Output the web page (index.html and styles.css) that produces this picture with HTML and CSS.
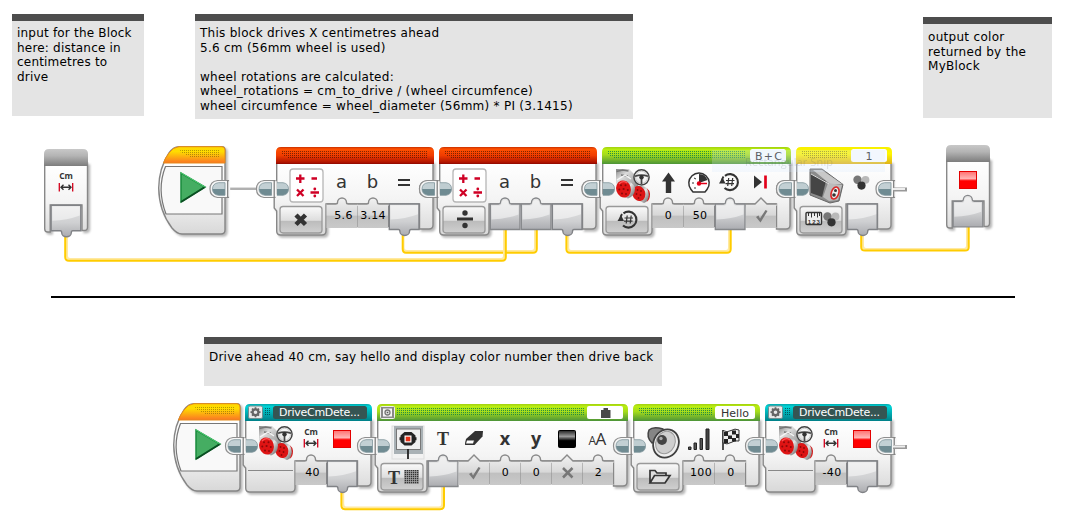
FILE: index.html
```html
<!DOCTYPE html>
<html lang="en">
<head>
<meta charset="utf-8">
<title>Drive centimetres program</title>
<link rel="stylesheet" href="styles.css">
</head>
<body>
<main class="canvas">
<section class="note note-input">input for the Block<br>here: distance in<br>centimetres to<br>drive</section>
<section class="note note-about">This block drives X centimetres ahead<br>5.6 cm (56mm wheel is used)<br><br>wheel rotations are calculated:<br>wheel_rotations = cm_to_drive / (wheel circumfence)<br>wheel circumfence = wheel_diameter (56mm) * PI (3.1415)</section>
<section class="note note-output">output color<br>returned by the<br>MyBlock</section>
<section class="note note-usage">Drive ahead 40 cm, say hello and display color number then drive back</section>
<svg class="diagram" width="1069" height="520" viewBox="0 0 1069 520">
<defs>
<linearGradient id="red" x2="0" y2="1"><stop offset="0" stop-color="#c83000"/><stop offset=".12" stop-color="#ff5000"/><stop offset=".5" stop-color="#f03c00"/><stop offset=".9" stop-color="#b01400"/><stop offset="1" stop-color="#8c0800"/></linearGradient>
<linearGradient id="green" x2="0" y2="1"><stop offset="0" stop-color="#a2d010"/><stop offset=".15" stop-color="#b9ee10"/><stop offset=".45" stop-color="#a5dc1c"/><stop offset="1" stop-color="#4c9438"/></linearGradient>
<linearGradient id="yellow" x2="0" y2="1"><stop offset="0" stop-color="#f8f000"/><stop offset=".4" stop-color="#fff600"/><stop offset="1" stop-color="#dfb21c"/></linearGradient>
<linearGradient id="teal" x2="0" y2="1"><stop offset="0" stop-color="#00a8ac"/><stop offset=".15" stop-color="#00d2d6"/><stop offset="1" stop-color="#008088"/></linearGradient>
<linearGradient id="orange" x2="0" y2="1"><stop offset="0" stop-color="#ffd800"/><stop offset=".3" stop-color="#ffdc00"/><stop offset="1" stop-color="#fb7524"/></linearGradient>
<linearGradient id="gray" x2="0" y2="1"><stop offset="0" stop-color="#c8c8c8"/><stop offset=".4" stop-color="#b4b4b4"/><stop offset="1" stop-color="#7c7c7c"/></linearGradient>
<linearGradient id="body" gradientUnits="userSpaceOnUse" x1="0" y1="16" x2="0" y2="88"><stop offset="0" stop-color="#fff"/><stop offset=".5" stop-color="#f4f4f4"/><stop offset="1" stop-color="#d8d8d8"/></linearGradient>
<linearGradient id="cellfill" gradientUnits="userSpaceOnUse" x1="0" y1="52" x2="0" y2="81"><stop offset="0" stop-color="#f0f0f0"/><stop offset=".55" stop-color="#d8d8d8"/><stop offset=".6" stop-color="#c0c0c0"/><stop offset="1" stop-color="#c9c9c9"/></linearGradient>
<linearGradient id="btn" x2="0" y2="1"><stop offset="0" stop-color="#fafafa"/><stop offset=".52" stop-color="#dedede"/><stop offset=".56" stop-color="#bcbcbc"/><stop offset="1" stop-color="#d0d0d0"/></linearGradient>
<linearGradient id="plugfill" x2="0" y2="1"><stop offset="0" stop-color="#e4e4e4"/><stop offset=".55" stop-color="#cfd0d2"/><stop offset="1" stop-color="#abacb0"/></linearGradient>
<linearGradient id="swatch" x2="0" y2="1"><stop offset="0" stop-color="#ff7070"/><stop offset=".42" stop-color="#ffb4b4"/><stop offset=".55" stop-color="#f00"/><stop offset="1" stop-color="#f00"/></linearGradient>
<linearGradient id="ink" x2="0" y2="1"><stop offset="0" stop-color="#222"/><stop offset=".35" stop-color="#999"/><stop offset=".6" stop-color="#000"/></linearGradient>
<linearGradient id="metal" x2="1" y2="1"><stop offset="0" stop-color="#888"/><stop offset=".3" stop-color="#dcdcdc"/><stop offset="1" stop-color="#777"/></linearGradient>
<linearGradient id="barrel" x2="1" y2="1"><stop offset="0" stop-color="#666"/><stop offset=".45" stop-color="#e6e6e6"/><stop offset="1" stop-color="#555"/></linearGradient>
<pattern id="dots" width="2" height="2" patternUnits="userSpaceOnUse"><rect width="1" height="1" fill="#000" opacity=".48"/></pattern>
<pattern id="gdots" width="2" height="2" patternUnits="userSpaceOnUse"><rect width="1" height="1" fill="#007846" opacity=".75"/></pattern>
<pattern id="screen" width="2" height="2" patternUnits="userSpaceOnUse"><rect width="2" height="2" fill="#aaa"/><rect width="1.3" height="1.3" fill="#333"/></pattern>

<g id="conn-out"><path d="M3.500-8.500H-7.500Q-15-7.500-15 0T-7.500 8.500H3.500z" fill="#f6f6f6" stroke="#8f8f8f" stroke-width="1.200"/><path d="M0-6.300H-6.500Q-12.500-5.500-12.500 0H0z" fill="#c3d0d4"/><path d="M0 6.300H-6.500Q-12.500 5.500-12.500 0H0z" fill="#6f8b92"/><path d="M0-6.300H-6.500Q-12.500-5.500-12.500 0T-6.500 6.300H0z" fill="none" stroke="#7d949a" stroke-width=".8"/><path d="M1-7.800H5.200V7.800H1z" fill="#f8f8f8"/><path d="M2.700-8.500V8.500" stroke="#777" stroke-width="1.200"/></g>
<g id="conn-in"><path d="M.8-6.300H7Q12.500-5.500 12.500 0H.8z" fill="#bfcdd1"/><path d="M.8 6.300H7Q12.500 5.500 12.500 0H.8z" fill="#6f8b92"/><path d="M.8-6.300H7Q12.500-5.500 12.500 0T7 6.300H.8" fill="none" stroke="#82979d" stroke-width=".8"/></g>
<g id="tail"><path d="M1 0H15" stroke="#999" stroke-width="4"/><path d="M1-.5H13" stroke="#eee" stroke-width="2"/></g>
<g id="cell"><path d="M0 57H9q2 0 2-1.500a4.500 4.500 0 0 1 9 0q0 1.500 2 1.500h9v24H0z" fill="url(#cellfill)"/><path d="M0 57H9q2 0 2-1.500a4.500 4.500 0 0 1 9 0q0 1.500 2 1.500h9" fill="none" stroke="#8a8a8a" stroke-width="1.400"/><path d="M31 59V80" stroke="#888"/></g>
<g id="cell-bool"><path d="M0 57H9l6.500-6 6.500 6h9v24H0z" fill="url(#cellfill)"/><path d="M0 57H9.500l6-6 6 6H31" fill="none" stroke="#8a8a8a" stroke-width="1.400"/><path d="M31 59V80" stroke="#888"/></g>
<g id="plug-in"><path d="M.8 57H9q2 0 2-1.500a4.500 4.500 0 0 1 9 0q0 1.500 2 1.500h8.500V82.500H.8z" fill="url(#plugfill)" stroke="#85878a" stroke-width="1.300"/><path d="M2 58.500h8q2 0 2-2a3.500 3.500 0 0 1 7 0q0 2 2 2h8v9Q17 72 2 72.500z" fill="#fff" opacity=".5"/></g>
<g id="plug-out"><path d="M.8 57H30.500V82.500H22.500q-1.500 0-1.500 2a4.800 4 0 0 1-9.600 0q0-2-1.500-2H.8z" fill="url(#plugfill)" stroke="#808286" stroke-width="1.400"/><path d="M2 58.300H29.500v9Q17 72 2 72.500z" fill="#fff" opacity=".5"/></g>
<rect id="button" x="4" y="59.500" width="42" height="26.500" rx="3" fill="url(#btn)" stroke="#999" stroke-width="1.300"/>

<g id="start"><path d="M67 4Q67 .7 64 .7H21Q15 1 11 7Q1 22 .7 42Q1 65 14 82Q19 88 24 88H63Q67 88 67 84z" fill="url(#body)" stroke="#858585" stroke-width="1.400" class="lift"/><path d="M67 4Q67 .7 64 .7H21Q15 1 11 7Q7 12 5.500 17H67z" fill="url(#orange)" stroke="#e58b1a"/><path d="M22 4h40v7H31V9h-4V7h-4z" fill="url(#dots)" opacity=".6"/><path d="M7.500 20.500H64V68H8Q-1.500 43 7.500 20.500z" fill="#f9f9f9" stroke="#777" stroke-width="1.200"/><path d="M23 27V56L47 41z" fill="#45ad62" stroke="#188a3c" stroke-width="1.500"/><path d="M23 56 47 41" stroke="#0b4d22" stroke-width="1.700"/><path d="M22.500 26.500 47 41" stroke="#52ce75" stroke-width="1"/></g>

<g id="math"><rect x="14" y="22" width="33" height="33" rx="3" fill="#fff" stroke="#b6b6b6" stroke-width="1.300"/><g stroke="#cf0025" stroke-width="2.300"><path d="M20 31.500h8.500M24.300 27.500v8.500M35.500 31.500h5.500M21 42.500l6.500 6.500M27.500 42.500l-6.500 6.500M34.500 45.500h8.500"/></g><circle cx="38.800" cy="42" r="1.400" fill="#cf0025"/><circle cx="38.800" cy="49" r="1.400" fill="#cf0025"/><text class="sym" x="65.500" y="41" text-anchor="middle">a</text><text class="sym" x="96.500" y="41" text-anchor="middle">b</text><path d="M122 33H134M122 38H134" stroke="#333" stroke-width="1.800"/></g>

<g id="wheel"><circle r="7.600" fill="#f3f3f3" fill-opacity=".8" stroke="#444" stroke-width="1.500"/><circle r="6" fill="none" stroke="#bbb" stroke-width=".7"/><path d="M-6.500-1Q0-3.500 6.500-1M0 0V7" fill="none" stroke="#444" stroke-width="1.700"/><circle r="2.200" fill="#333"/></g>
<g id="motor"><path d="M14 22H27L39 34 34 42 20 44 14 36z" fill="url(#metal)"/><path d="M14.500 24.500l6-1.500 6 1M19 28l7 1" stroke="#777" fill="none" stroke-width="1.300"/><path d="M15 33l8-5 6 4" stroke="#f6f6f6" fill="none" stroke-width="1.300"/><path d="M38 39Q47 39 47.500 46.500Q47 54 42 56L36 53.500V40z" fill="url(#barrel)"/><path d="M44.500 41Q49 47 44.500 55Q48 53 48 47Q47.500 43 44.500 41z" fill="#d31b1b"/><ellipse cx="36.800" cy="46.500" rx="6.500" ry="7.700" fill="#dc1515" transform="rotate(-18 36.800 46.500)"/><path d="M22 34Q31 34 33 41Q33 49 26 51.500L20 49z" fill="url(#barrel)"/><ellipse cx="21.500" cy="42" rx="7.300" ry="8.600" fill="#de1414" transform="rotate(-18 21.500 42)"/><path d="M17 37q4-4 8-1" stroke="#f55" fill="none" stroke-width="1.200"/><g fill="#8b0909"><circle cx="19" cy="38.200" r="1"/><circle cx="23.500" cy="38.200" r="1"/><circle cx="17.300" cy="42.500" r="1"/><circle cx="21.600" cy="42" r="1.100"/><circle cx="25.800" cy="43" r="1"/><circle cx="20" cy="46.500" r="1"/><circle cx="24" cy="47" r=".9"/><circle cx="35.500" cy="43" r=".9"/><circle cx="39" cy="44" r=".9"/><circle cx="34.500" cy="47" r=".9"/><circle cx="38.500" cy="48" r=".9"/><circle cx="36.500" cy="51" r=".9"/></g><use href="#wheel" x="39.500" y="30.300"/></g>
<g id="cm"><text x="0" y="-3" class="cm" text-anchor="middle">Cm</text><path d="M-6.700 1v8.500M6.700 1v8.500" stroke="#d3001b" stroke-width="1.300"/><path d="M-5 5.200H5M-2.500 2.700-5 5.200-2.500 7.700M2.500 2.700 5 5.200 2.500 7.700" fill="none" stroke="#333" stroke-width="1.400"/></g>
<g id="colorbox"><rect x="-8.500" y="-8.500" width="17" height="17" fill="url(#swatch)" stroke="#e30000" stroke-width="1"/></g>
<g id="rot"><path d="M-5-6.200A8 8 0 1 1-5.500 6" fill="none" stroke="#333" stroke-width="2.100"/><path d="M-6.500-5.500A8 8 0 0 0-8 0" fill="none" stroke="#333" stroke-width="2"/><path d="M-11 1.500-7.500-4.500-4.500 1.500z" fill="#333"/><path d="M-1.300-4-2.300 4M2.700-4 1.700 4M-4-1.500H4.500M-4.500 1.700H4" stroke="#333" stroke-width="1.200"/></g>
<g id="rgb"><circle cx="-4" cy="-2.500" r="4.200" fill="#777"/><circle cx="4" cy="-2.500" r="3.900" fill="#b9b9b9"/><circle cx="0" cy="3.300" r="4.100" fill="#333"/></g>
<g id="myblock"><path d="M.7 15V46l-2.500 3v12l2.500 3v20q0 4 4 4H46q4 0 4-4V57h62.500v25H122q4 0 4-4V15z" class="shell"/><path d="M0 17V5Q0 0 5 0H122Q127 0 127 5V17z" fill="url(#teal)"/><rect x="3.500" y="2" width="14" height="12.500" rx="1.500" fill="#e9e9e9" stroke="#6f8f90"/><circle cx="10.500" cy="8.200" r="2.900" fill="none" stroke="#666" stroke-width="2.200"/><path d="M10.500 3.200v2M10.500 11.200v2M5.500 8.200h2M13.500 8.200h2M7 4.700l1.500 1.500M12.500 10.200l1.500 1.500M14 4.700l-1.500 1.500M8.500 10.200 7 11.700" stroke="#666" stroke-width="1.700"/><path d="M20 4h5v8h-5z" fill="url(#dots)"/><rect x="28" y="2" width="94" height="13" rx="2.500" fill="#355553"/><text class="title" x="34" y="12.300" textLength="81" fill="#fff">DriveCmDete...</text><path d="M3 66.500H48" stroke="#888" stroke-width="1.200"/><use href="#motor"/><use href="#cm" x="66" y="34"/><use href="#colorbox" x="97" y="35"/><use href="#cell" x="50.500"/><use href="#plug-out" x="81.500"/><use href="#conn-in" y="42"/></g>
<path id="check" d="M-5.500 1-3-.5-1.500 2.500 4-6 6-5-1 6.500z" fill="#777"/>
</defs>

<path d="M51 297H1015" stroke="#000" stroke-width="2"/>

<g class="wires">
<path class="wire-lite" d="M403.500 234V247.500Q403.500 251 407 251H532Q535 251 535 248V230"/>
<path class="wire" d="M402.700 234V249Q402.700 252.700 406 252.700H533Q536.800 252.700 536.800 249V230"/>
<path class="wire-lite" d="M67 236V256Q67 259 70 259H501Q504 259 504 256V230"/>
<path class="wire" d="M65.200 236V257Q65.200 260.800 69 260.800H502Q505.800 260.800 505.800 257V230"/>
<path class="wire-lite" d="M568.200 234V248Q568.200 251 571 251H726Q729 251 729 248V230"/>
<path class="wire" d="M566.400 234V249Q566.400 252.700 570 252.700H727Q730.700 252.700 730.700 249V230"/>
<path class="wire-lite" d="M863 234V246Q863 249 866 249H964Q967 249 967 246V227"/>
<path class="wire" d="M861.200 234V247Q861.200 250.600 865 250.600H965Q968.700 250.600 968.700 247V227"/>
<path class="wire-lite" d="M343.200 490V504Q343.200 507.500 346 507.500H439Q442.200 507.500 442.200 504V486"/>
<path class="wire" d="M341.400 490V505Q341.400 509.300 345 509.300H440Q444 509.300 444 505V486"/>
</g>

<!-- Input parameter terminal -->
<g transform="translate(44 149)"><path d="M.7 14V80q0 3 3 3h2.500V56H38v25.500h2q3.500 0 3.500-3V14z" class="shell"/><path d="M0 17V5Q0 0 5 0H39Q44 0 44 5V17z" fill="url(#gray)"/><use href="#cm" x="22" y="33"/><use href="#plug-out" x="6.300" y="-.7"/></g>

<!-- Top program row -->
<g transform="translate(158 146)"><use href="#start"/></g>
<path d="M227 188.500H263" stroke="#b0b0b0" stroke-width="3"/><path d="M227 187.500H263" stroke="#ddd"/>
<use href="#conn-out" x="225" y="189"/>

<g transform="translate(276 147)">
<path d="M.7 15V46l-2.500 3v12l2.500 3v20q0 4 4 4H46q4 0 4-4V57h93.500v25H153q4 0 4-4V15z" class="shell"/><path d="M0 17V5Q0 0 5 0H153Q158 0 158 5V17z" fill="url(#red)"/><path d="M5 4H152v7H11V9H8V7H5z" fill="url(#dots)"/>
<use href="#math"/><use href="#button"/><path d="M20 68 29.500 77.500M29.500 68 20 77.500" stroke="#333" stroke-width="4.500"/>
<use href="#cell" x="50.500"/><use href="#cell" x="81.500"/><text class="val" x="67.500" y="72">5.6</text><text class="val" x="97" y="72">3.14</text><use href="#plug-out" x="112.500"/><use href="#conn-in" y="42"/></g>
<use href="#conn-out" x="271.500" y="189"/>
<use href="#conn-out" x="434.500" y="189"/>

<g transform="translate(439 147)">
<path d="M.7 15V46l-2.500 3v12l2.500 3v20q0 4 4 4H46q4 0 4-4V57h93.500v25H153q4 0 4-4V15z" class="shell"/><path d="M0 17V5Q0 0 5 0H153Q158 0 158 5V17z" fill="url(#red)"/><path d="M5 4H152v7H11V9H8V7H5z" fill="url(#dots)"/>
<use href="#math"/><use href="#button"/><path d="M18 72H34" stroke="#333" stroke-width="3"/><circle cx="26" cy="66" r="2.700" fill="#333"/><circle cx="26" cy="78.500" r="2.700" fill="#333"/>
<use href="#plug-in" x="50.500"/><use href="#plug-in" x="81.500"/><use href="#plug-out" x="112.500"/><use href="#conn-in" y="42"/></g>
<use href="#conn-out" x="434.500" y="189"/>
<use href="#conn-out" x="597" y="189"/>

<g transform="translate(602 147)">
<path d="M.7 15V46l-2.500 3v12l2.500 3v20q0 4 4 4H46q4 0 4-4V57h124.500v25H184q4 0 4-4V15z" class="shell"/><path d="M0 17V5Q0 0 5 0H184Q189 0 189 5V17z" fill="url(#green)"/><path d="M5 4H144v7H11V9H8V7H5z" fill="url(#gdots)"/>
<rect x="148" y="2" width="36" height="13" rx="2.500" fill="#f8fbfd"/><text class="title" x="166.500" y="12.500" text-anchor="middle" textLength="27">B+C</text>
<use href="#motor"/><path d="M66.500 25.500 73 34.500H69.200V46H63.800V34.500H60z" fill="#333"/>
<path d="M89 42.500A10.200 10.200 0 1 1 105 42.500L103 45H91z" fill="#fff" stroke="#333" stroke-width="1.500"/><path d="M97 27A9 9 0 0 1 105.500 33L97 36z" fill="#333"/><path d="M97 36.500H105" stroke="#e2001a" stroke-width="1.500"/><circle cx="97" cy="36.500" r="2.200" fill="#e2001a"/><path d="M90 36h2M92 31l2 1M92 41h2" stroke="#333"/>
<use href="#rot" x="128" y="35"/><path d="M152 28.500 160 35 152 41.500z" fill="#333"/><path d="M163.500 28.500v13" stroke="#e2001a" stroke-width="2.700"/>
<use href="#button"/><use href="#rot" x="26.500" y="72.500"/>
<use href="#cell" x="50.500"/><use href="#cell" x="81.500"/><use href="#cell-bool" x="143.500"/><use href="#plug-in" x="112.500"/><text class="val" x="66.500" y="72">0</text><text class="val" x="98" y="72">50</text><use href="#check" x="159.500" y="69"/><use href="#conn-in" y="42"/></g>
<use href="#conn-out" x="597" y="189"/>
<use href="#conn-out" x="791.500" y="189"/>

<g transform="translate(796 147)">
<path d="M.7 15V46l-2.500 3v12l2.500 3v20q0 4 4 4H46q4 0 4-4V57h31.500v25H91q4 0 4-4V15z" class="shell"/><path d="M0 17V5Q0 0 5 0H91Q96 0 96 5V17z" fill="url(#yellow)"/><path d="M5 4H52v7H11V9H8V7H5z" fill="url(#dots)" opacity=".75"/>
<rect x="55" y="2" width="36" height="13" rx="2.500" fill="#fafcfe"/><text class="title" x="73" y="12.500" text-anchor="middle">1</text>
<path d="M14 22H26L47 37.500 43 54 34 56 14 48z" fill="#8b8b8b" stroke="#666"/><path d="M15 27 30 34 26 50 15 46z" fill="#454545"/><path d="M17 23H26L46 37 34 37z" fill="#c8c8c8"/><path d="M32 36 46 38 42 53 33 54 27 50z" fill="#bbb"/><path d="M15 27 33 37" stroke="#ddd"/><ellipse cx="39" cy="46" rx="3.700" ry="6.200" fill="#eee" stroke="#d92828" stroke-width="1.600" transform="rotate(20 39 46)"/><circle cx="39.500" cy="43.500" r="1.500" fill="#333"/><circle cx="38" cy="48" r="1.800" fill="#333"/>
<use href="#rgb" x="65.500" y="35.300"/><use href="#button"/><rect x="10" y="65.500" width="15.500" height="12" rx="1" fill="#eee" stroke="#333" stroke-width="1.400"/><path d="M12.500 66v3M15.500 66v4.500M18.500 66v3M21.500 66v4.500M23.500 66v3" stroke="#333"/><text x="17.800" y="76.500" class="ruler" text-anchor="middle" textLength="12">123</text><use href="#rgb" x="35.500" y="72"/>
<use href="#plug-out" x="50.700"/><use href="#conn-in" y="42"/></g>
<use href="#conn-out" x="791.500" y="189"/>
<use href="#conn-out" x="891" y="189"/><use href="#tail" x="892" y="189.500"/>

<!-- Output parameter terminal -->
<g transform="translate(946 145)"><path d="M.7 14V80q0 3 3 3h2.500V56H38v25.500h2q3.500 0 3.500-3V14z" class="shell"/><path d="M0 17V5Q0 0 5 0H39Q44 0 44 5V17z" fill="url(#gray)"/><use href="#colorbox" x="22" y="35"/><use href="#plug-in" x="6.300" y="-.7"/></g>

<rect x="712" y="150" width="173" height="22" fill="#d8ebff" opacity=".24"/>
<text class="ghost" x="745" y="166" textLength="88">Rectangular Snip</text>

<!-- Bottom program row -->
<g transform="translate(173 403)"><use href="#start"/></g>
<use href="#myblock" x="245" y="404"/>
<use href="#conn-out" x="240.500" y="446"/>
<text class="val" x="312.500" y="476">40</text>

<g transform="translate(377 404)">
<path d="M.7 15V46l-2.500 3v12l2.500 3v20q0 4 4 4H46q4 0 4-4V57h186.500v25H246q4 0 4-4V15z" class="shell"/><path d="M0 17V5Q0 0 5 0H246Q251 0 251 5V17z" fill="url(#green)"/><path d="M20 4H208v8H20z" fill="url(#gdots)"/>
<rect x="3.500" y="2.500" width="14" height="12" rx="1" fill="#888" stroke="#eee"/><rect x="6" y="4.500" width="9" height="8" fill="#f6f6f6"/><circle cx="10.500" cy="8.500" r="2.500" fill="#ddd" stroke="#777" stroke-width="1.300"/><circle cx="10.500" cy="8.500" r=".8" fill="#555"/>
<rect x="210" y="2" width="36" height="13" rx="2" fill="#fff"/><path d="M224 6h2.500V4h4.500v2h2.500v8h-9.500z" fill="#484848"/>
<rect x="15" y="22" width="32" height="33" fill="#f2f2f2" stroke="#ddd"/><rect x="17" y="22" width="29" height="28" fill="#a9b1b5"/><rect x="19.500" y="25" width="24" height="20.500" fill="#f0f0f0" stroke="#777"/><path d="M27.500 28h7l4 3.500v6.500l-4 3.500h-7l-4-3.500v-6.500z" fill="#252525"/><path d="M22.500 34.700h4M35.500 34.700h4" stroke="#222" stroke-width="3"/><rect x="27.500" y="31.500" width="7" height="7" fill="#fff"/><rect x="28.700" y="32.700" width="4.600" height="4.600" fill="#e83218"/><path d="M31 45V55" stroke="#222" stroke-width="1.800"/>
<text class="serif" x="66" y="41" text-anchor="middle">T</text>
<path d="M89 35 98 27H106L105.500 32.500 97.500 41H88z" fill="#333"/><path d="M89.500 36H97.500L96.500 40H88.500zM99 36 104 31" fill="#fff" stroke="#333"/>
<text class="axis" x="128" y="40.500" text-anchor="middle">x</text><text class="axis" x="159" y="40.500" text-anchor="middle">y</text><rect x="181.500" y="26.500" width="17" height="17" rx="1" fill="url(#ink)" stroke="#000"/>
<text class="font-a" x="211.500" y="41">A</text><text class="font-b" x="218.500" y="41">A</text>
<use href="#button"/><text class="serif" x="17" y="79.500" text-anchor="middle">T</text><rect x="27" y="66" width="15" height="14" fill="url(#screen)"/>
<use href="#plug-in" x="50.500"/><use href="#cell-bool" x="81.500"/><use href="#cell" x="112.500"/><use href="#cell" x="143.500"/><use href="#cell-bool" x="174.500"/><use href="#cell" x="205.500"/>
<use href="#check" x="97.500" y="69"/><text class="val" x="128.500" y="72">0</text><text class="val" x="159.500" y="72">0</text><path d="M186 64 195.500 73.500M195.500 64 186 73.500" stroke="#777" stroke-width="2.500"/><text class="val" x="221.500" y="72">2</text><use href="#conn-in" y="42"/></g>
<use href="#conn-out" x="372.500" y="446"/>

<g transform="translate(633 404)">
<path d="M.7 15V46l-2.500 3v12l2.500 3v20q0 4 4 4H46q4 0 4-4V57h62.500v25H122q4 0 4-4V15z" class="shell"/><path d="M0 17V5Q0 0 5 0H122Q127 0 127 5V17z" fill="url(#green)"/><path d="M5 4H80v7H11V9H8V7H5z" fill="url(#gdots)"/>
<rect x="82" y="2" width="40" height="13" rx="2.500" fill="#fff"/><text class="title" x="102" y="12.500" text-anchor="middle" textLength="28">Hello</text>
<path d="M19 39Q13 33 16 26Q20 22 30 25L32 35z" fill="#858585" stroke="#444" stroke-width="1.500"/><ellipse cx="33" cy="39.500" rx="12.500" ry="14.500" transform="rotate(25 33 39.500)" fill="#efefef" stroke="#404040" stroke-width="1.800"/><ellipse cx="32.500" cy="38.500" rx="9.500" ry="11.500" transform="rotate(25 32.500 38.500)" fill="#cfcfcf" stroke="#999"/><circle cx="29" cy="36" r="4.900" fill="#444"/><circle cx="28" cy="34.500" r="1.700" fill="#aaa"/>
<g fill="#555" stroke="#222" stroke-width="1"><path d="M55.500 43h2.500v2.500h-2.500zM61 39h2.500v6.500H61zM67 34.500h2.500v11H67z"/></g><path d="M73 25h3v20.500h-3z" fill="#444" stroke="#222"/>
<path d="M90 26V46" stroke="#333" stroke-width="1.700"/><path d="M90 26.500Q94 29 98 26.500T106 26V37Q102 36 98 38.500T90 39z" fill="#eee" stroke="#333"/><path d="M91 28h4v4h-4zM99 26.500h4v4h-4zM95 31.500h4v3.500h-4zM103 30h3v4h-3zM91 35h4v4h-4zM99 34h4v3.500h-4z" fill="#222"/>
<use href="#button"/><path d="M17 79V66.500h5l2 2.500h9v3M17 79 21.500 71.500H37L32 79z" fill="#ddd" stroke="#333" stroke-width="1.700"/>
<use href="#cell" x="50.500"/><use href="#cell" x="81.500"/><text class="val" x="68" y="72">100</text><text class="val" x="98" y="72">0</text><use href="#conn-in" y="42"/></g>
<use href="#conn-out" x="628.500" y="446"/>

<use href="#myblock" x="765" y="404"/>
<use href="#conn-out" x="760.500" y="446"/>
<text class="val" x="832" y="476">-40</text>
<use href="#conn-out" x="891.500" y="446"/><use href="#tail" x="892" y="447"/>
</svg>
</main>
</body>
</html>
```
FILE: styles.css
```css
body { margin: 0; background: #fff; }
.canvas { position: relative; width: 1069px; height: 520px; overflow: hidden; }
.diagram { display: block; font-family: Verdana, "DejaVu Sans", sans-serif; }
.note {
  position: absolute;
  box-sizing: border-box;
  padding: 5px 0 0 5px;
  border-top: 7px solid #4d4d4d;
  background: #e4e4e4;
  color: #000;
  font: 12px/14.58px Verdana, "DejaVu Sans", sans-serif;
  letter-spacing: .2px;
  white-space: nowrap;
}
.note-input { left: 12px; top: 14px; width: 132px; height: 102px; }
.note-about { left: 195px; top: 14px; width: 438px; height: 105px; letter-spacing: .27px; }
.note-output { left: 923px; top: 17px; width: 129px; height: 101px; padding-top: 6px; letter-spacing: .3px; }
.note-usage { left: 204px; top: 337px; width: 458px; height: 49px; padding-top: 6px; letter-spacing: .21px; }
.shell {
  fill: url(#body);
  stroke: #888;
  stroke-width: 1.4;
  filter: drop-shadow(2px 2px 1px rgba(0, 0, 0, .28));
}
.lift { filter: drop-shadow(2px 2px 1px rgba(0, 0, 0, .28)); }
.wire, .wire-lite { fill: none; stroke: #fc0; stroke-width: 2; }
.wire-lite { stroke: #ffe9a0; stroke-width: 2; }
.sym { font-size: 18px; fill: #333; }
.val { font-size: 11px; fill: #000; letter-spacing: .3px; text-anchor: middle; }
.title { font-size: 11px; }
.title:not([fill]) { fill: #333; }
.cm { font: bold 8.5px "Open Sans", sans-serif; fill: #333; }
.ruler { font: bold 6px "Liberation Sans", sans-serif; fill: #333; }
.serif { font: bold 18px "Liberation Serif", serif; fill: #333; }
.axis { font: bold 18px "Open Sans", sans-serif; fill: #333; }
.font-a { font: 12px "Open Sans", sans-serif; fill: #333; }
.font-b { font: 17px "Open Sans", sans-serif; fill: #333; }
.ghost { font: 11px "Open Sans", sans-serif; fill: #345; opacity: .15; }
```
